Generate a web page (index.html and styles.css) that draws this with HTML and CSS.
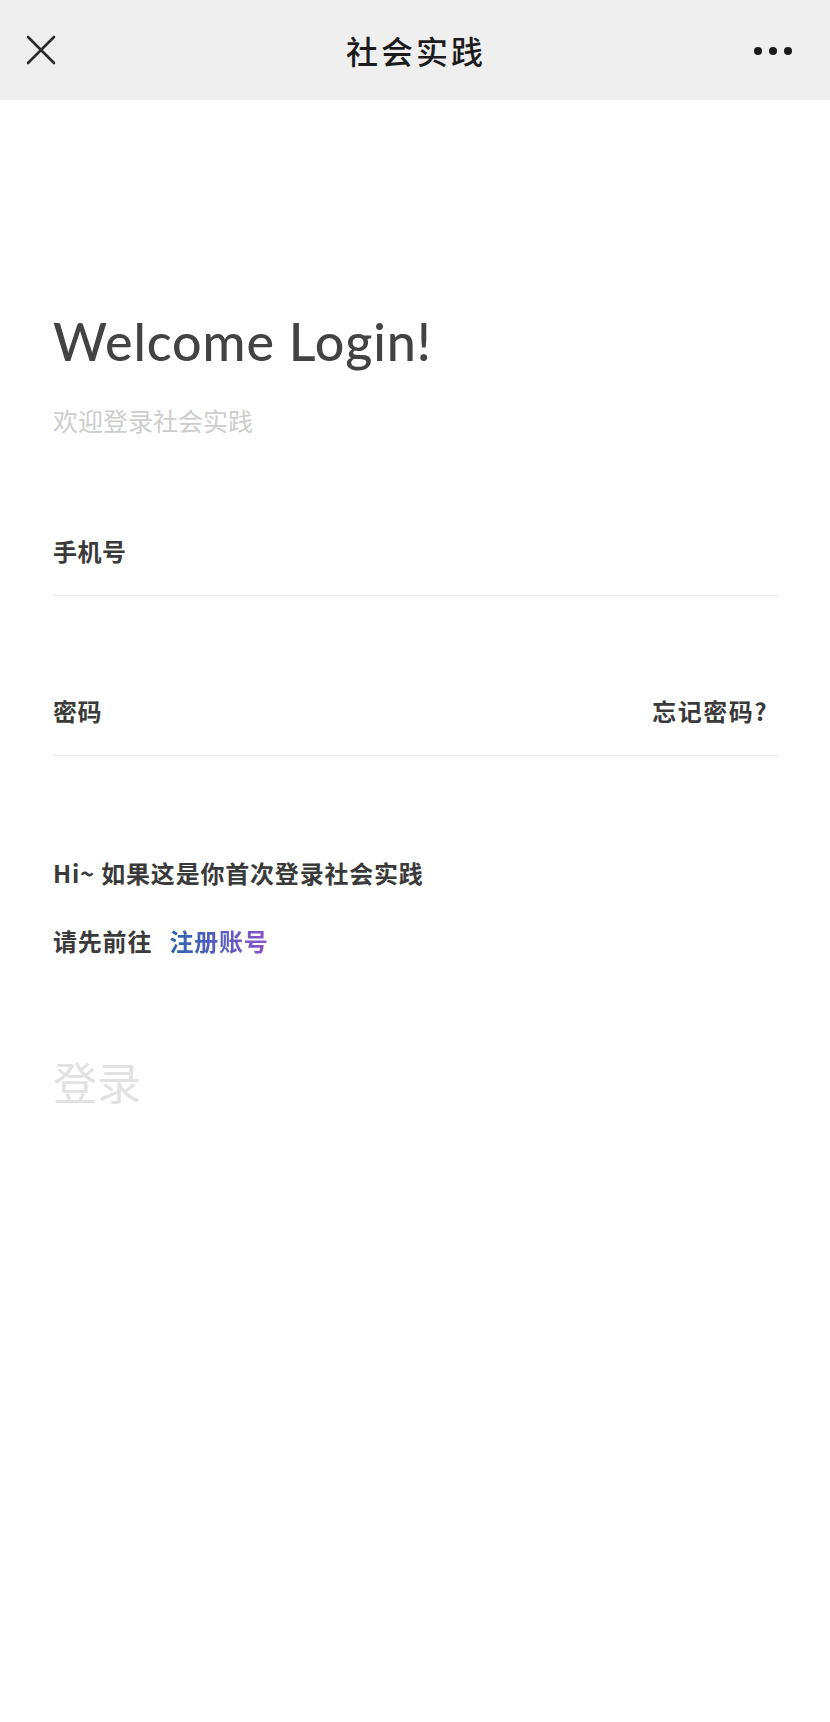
FILE: index.html
```html
<!DOCTYPE html>
<html>
<head>
  <meta charset="utf-8">
  <title>社会实践</title>
  <link rel="stylesheet" href="styles.css">
</head>
<body>
<div class="top-bar">
  <span class="close-btn">
    <svg width="30" height="30" viewBox="0 0 30 30">
      <path d="M2 2 L28 28 M28 2 L2 28" stroke="#2a2a2a" stroke-width="2.6" stroke-linecap="round" fill="none"/>
    </svg>
  </span>
  <div class="top-title">社会实践</div>
  <span class="more-btn">
    <i></i><i></i><i></i>
  </span>
</div>

<div class="login-container">
  <h1 class="welcome">Welcome Login!</h1>
  <p class="sub-title">欢迎登录社会实践</p>

  <div class="field">
    <label for="phone">手机号</label>
  </div>

  <div class="field">
    <label for="password">密码</label>
    <span class="forget">忘记密码?</span>
  </div>

  <p class="tip">Hi~ 如果这是你首次登录社会实践</p>
  <p class="tip tip-second">请先前往 <span class="register">注册账号</span></p>

  <div class="login-btn">登录</div>
</div>
</body>
</html>
```

FILE: styles.css
```css
body {
  font-family: "Noto Sans CJK SC", "Noto Sans", sans-serif;
  margin: 0;
  padding: 0;
  background: #fff;
  color: #3a3a3a;
}
.top-bar {
  height: 100px;
  background: #efefef;
  display: flex;
  align-items: center;
  justify-content: space-between;
  padding: 0 38px 0 26px;
}
.close-btn {
  width: 30px;
  height: 30px;
  display: flex;
}
.top-title {
  font-size: 32px;
  line-height: 40px;
  font-weight: 500;
  color: #1c1c1c;
  letter-spacing: 3px;
  margin-left: 22px;
}
.more-btn {
  display: flex;
  gap: 7px;
  width: 38px;
  margin-top: 1px;
}
.more-btn i {
  width: 8px;
  height: 8px;
  border-radius: 50%;
  background: #1a1a1a;
}
.login-container {
  padding: 0 52px 0 53px;
}
.welcome {
  font-family: Lato, "Noto Sans", sans-serif;
  font-size: 52px;
  line-height: 60px;
  font-weight: 500;
  letter-spacing: 0.9px;
  color: #434343;
  margin: 211px 0 0;
}
.sub-title {
  font-size: 25px;
  line-height: 32px;
  color: #cdcdcd;
  margin: 33px 0 0;
}
.field {
  display: flex;
  justify-content: space-between;
  margin-top: 99px;
  padding-bottom: 28px;
  border-bottom: 1px solid #ececec;
}
.field + .field {
  margin-top: 99px;
}
.field label, .forget {
  font-size: 24px;
  line-height: 32px;
  font-weight: bold;
  color: #3a3a3a;
  letter-spacing: 0.5px;
}
.forget {
  margin-right: 10px;
  letter-spacing: 1.5px;
}
.tip {
  font-size: 24px;
  line-height: 32px;
  font-weight: bold;
  color: #3a3a3a;
  letter-spacing: 0.8px;
  margin: 101px 0 0;
}
.tip-second {
  margin-top: 36px;
}
.register {
  margin-left: 11px;
  background: linear-gradient(90deg, #2a64ad, #5a5cc0 55%, #9152c8);
  -webkit-background-clip: text;
  background-clip: text;
  color: transparent;
}
.login-btn {
  font-size: 44px;
  line-height: 50px;
  color: #e2e2e2;
  margin-top: 99px;
}
```
